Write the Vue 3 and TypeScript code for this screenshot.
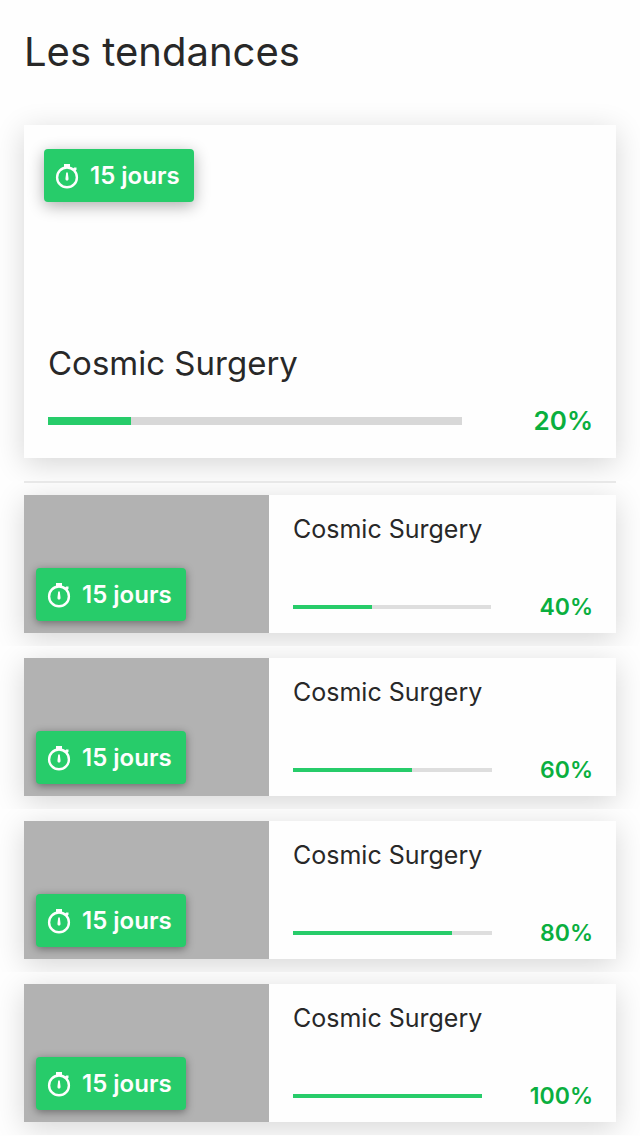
<script setup lang="ts">
import { h } from 'vue'

interface Project {
  id: number
  name: string
  days: number
  progress: number
}

const featured: Project = { id: 1, name: 'Cosmic Surgery', days: 15, progress: 20 }

const projects: Project[] = [
  { id: 2, name: 'Cosmic Surgery', days: 15, progress: 40 },
  { id: 3, name: 'Cosmic Surgery', days: 15, progress: 60 },
  { id: 4, name: 'Cosmic Surgery', days: 15, progress: 80 },
  { id: 5, name: 'Cosmic Surgery', days: 15, progress: 100 },
]

const TimerIcon = () =>
  h('svg', { viewBox: '0 0 24 26', width: 24, height: 26, 'aria-hidden': 'true' }, [
    h('circle', { cx: 12, cy: 14.4, r: 9.9, fill: 'none', stroke: 'currentColor', 'stroke-width': 2.4 }),
    h('path', { d: 'M9 1h6v3.5H9zM17.8 6l1.3-1.5h2.4v2.2l-1.4 1.5z', fill: 'currentColor' }),
    h('path', { d: 'M11.2 9.5h1.6l.7 5.7c.2 1.5-.4 2.3-1.5 2.3s-1.7-.8-1.500-2.300z', fill: 'currentColor' }),
  ])
</script>

<template>
  <main class="page">
    <h1 class="title">Les tendances</h1>

    <article class="featured">
      <span class="badge"><TimerIcon />{{ featured.days }} jours</span>
      <div class="featured-body">
        <h2 class="featured-name">{{ featured.name }}</h2>
        <div class="funding">
          <div
            class="track"
            role="progressbar"
            :aria-label="featured.name"
            :aria-valuenow="featured.progress"
            aria-valuemin="0"
            aria-valuemax="100"
          >
            <div class="fill" :style="{ width: featured.progress + '%' }"></div>
          </div>
          <span class="percent">{{ featured.progress }}%</span>
        </div>
      </div>
    </article>

    <ul class="list">
      <li v-for="project in projects" :key="project.id" class="row">
        <article class="card">
          <div class="cover">
            <span class="badge"><TimerIcon />{{ project.days }} jours</span>
          </div>
          <div class="info">
            <h2 class="name">{{ project.name }}</h2>
            <div class="funding">
              <div
                class="track"
                role="progressbar"
                :aria-label="project.name"
                :aria-valuenow="project.progress"
                aria-valuemin="0"
                aria-valuemax="100"
              >
                <div class="fill" :style="{ width: project.progress + '%' }"></div>
              </div>
              <span class="percent">{{ project.progress }}%</span>
            </div>
          </div>
        </article>
      </li>
    </ul>
  </main>
</template>

<style>
body {
  margin: 0;
  background: #fefefe;
}
</style>

<style scoped>
.page {
  padding-top: 24px;
  overflow: hidden;
  color: #282828;
  font-family: Inter, "Liberation Sans", sans-serif;
}

.title,
.featured-name,
.name {
  margin: 0;
  font-weight: 400;
}

.title {
  margin: 0 24px 45px;
  font-size: 40px;
  line-height: 56px;
}

.featured,
.card {
  background: #fefefe;
  box-shadow: 0 6px 28px rgba(0, 0, 0, 0.16);
}

.featured {
  display: flex;
  flex-direction: column;
  align-items: flex-start;
  justify-content: space-between;
  min-height: 333px;
  margin: 0 24px 23px;
  padding: 24px 23px 21px 20px;
  box-sizing: border-box;
}

.featured-body {
  align-self: stretch;
  padding-left: 4px;
}

.featured-name {
  margin-bottom: 20px;
  font-size: 33px;
  line-height: 44px;
}

.badge {
  display: flex;
  align-items: center;
  gap: 11px;
  box-sizing: border-box;
  height: 53px;
  padding: 0 14px 0 11px;
  border-radius: 4px;
  background: #27cc6a;
  box-shadow: 0 4px 16px rgba(0, 0, 0, 0.32);
  color: #fefefe;
  font-size: 24px;
  font-weight: 600;
  white-space: nowrap;
}

.funding {
  display: flex;
  align-items: center;
}

.track {
  flex: 1;
  height: 4px;
  background: #dedede;
}

.featured .track {
  height: 8px;
  background: #d8d8d8;
}

.fill {
  height: 100%;
  background: #27cc6a;
}

.percent {
  margin-left: 48px;
  color: #0aaf3f;
  font-size: 23px;
  font-weight: 600;
  line-height: 32px;
}

.featured .percent {
  margin-left: 72px;
  font-size: 26px;
}

.list {
  margin: 0;
  padding: 0;
  list-style: none;
}

.row {
  padding: 12px 24px 13px;
  overflow: hidden;
  background: #fefefe;
}

.row:first-child {
  position: relative;
  padding-top: 14px;
}

.row:first-child::before {
  content: "";
  position: absolute;
  top: 0;
  right: 24px;
  left: 24px;
  height: 2px;
  background: #e8e8e8;
}

.card {
  display: flex;
  min-height: 138px;
}

.cover {
  display: flex;
  align-items: flex-end;
  flex: 0 0 245px;
  box-sizing: border-box;
  padding: 12px;
  background: #b2b2b2;
}

.cover .badge {
  box-shadow: 0 2px 8px rgba(0, 0, 0, 0.4);
}

.info {
  display: flex;
  flex: 1;
  flex-direction: column;
  justify-content: space-between;
  padding: 18px 23px 10px 24px;
}

.name {
  font-size: 25px;
  line-height: 32px;
}
</style>
